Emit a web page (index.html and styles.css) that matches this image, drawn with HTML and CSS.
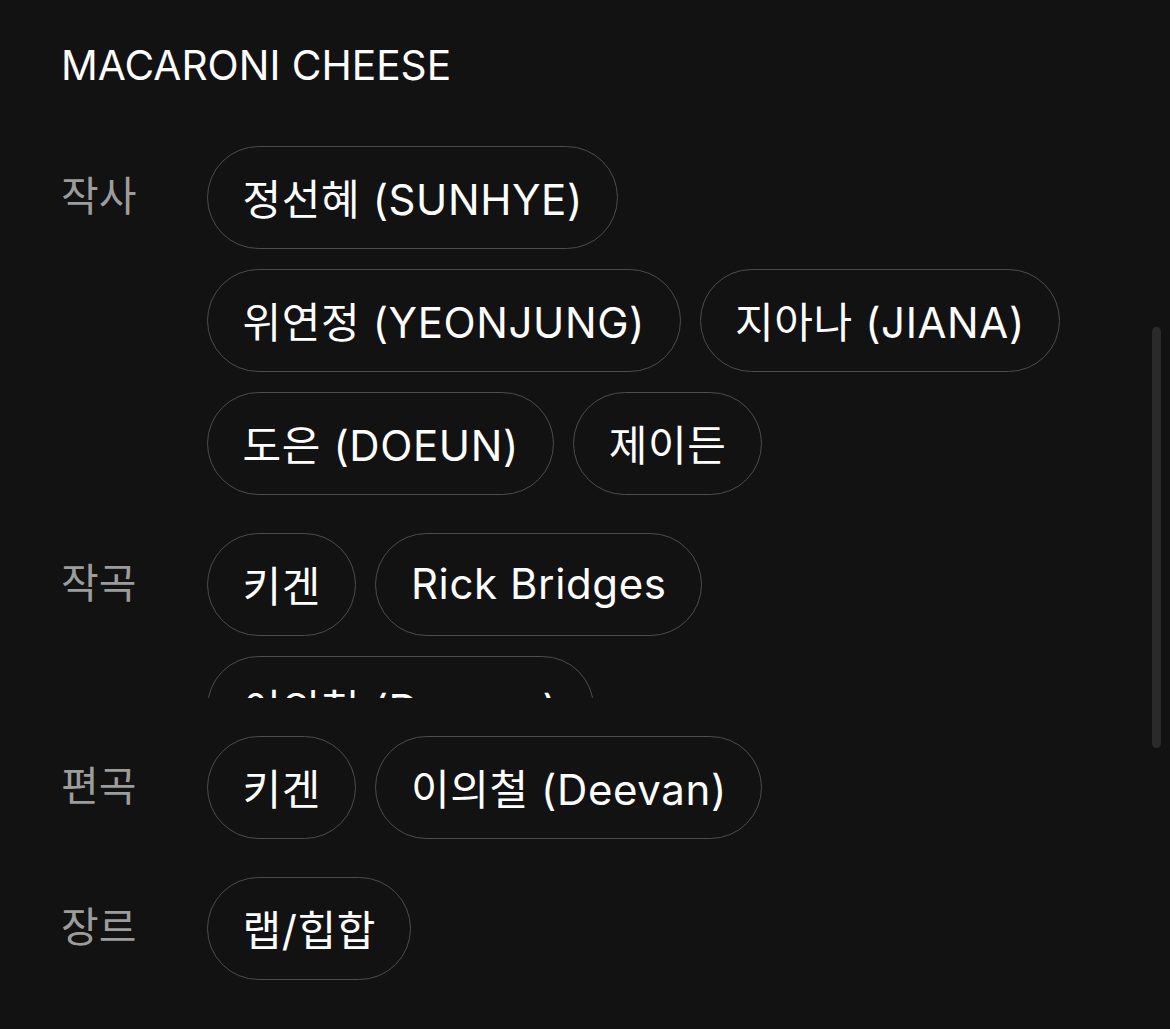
FILE: index.html
```html
<!DOCTYPE html>
<html lang="ko">
<head>
<meta charset="utf-8">
<link rel="stylesheet" href="styles.css">
</head>
<body>
<main class="page">
  <h1 class="title">MACARONI CHEESE</h1>
  <section class="credit">
    <div class="label">작사</div>
    <div class="chips">
      <span class="chip">정선혜 (SUNHYE)</span>
      <span class="chip">위연정 (YEONJUNG)</span>
      <span class="chip">지아나 (JIANA)</span>
      <span class="chip">도은 (DOEUN)</span>
      <span class="chip">제이든</span>
    </div>
  </section>
  <section class="credit">
    <div class="label">작곡</div>
    <div class="chips clipped">
      <span class="chip">키겐</span>
      <span class="chip">Rick Bridges</span>
      <span class="chip">이의철 (Deevan)</span>
    </div>
  </section>
  <section class="credit">
    <div class="label">편곡</div>
    <div class="chips">
      <span class="chip">키겐</span>
      <span class="chip">이의철 (Deevan)</span>
    </div>
  </section>
  <section class="credit">
    <div class="label">장르</div>
    <div class="chips">
      <span class="chip">랩/힙합</span>
    </div>
  </section>
</main>
<div class="scrollbar"></div>
</body>
</html>
```
FILE: styles.css
```css
html, body {
  margin: 0;
  padding: 0;
  background: #121212;
}
body {
  font-family: "Inter", "Noto Sans CJK KR", sans-serif;
  color: #ffffff;
  height: 1029px;
  overflow: hidden;
}
.page {
  padding: 40px 0 0 61px;
  display: flex;
  flex-direction: column;
  gap: 38px;
}
.title {
  margin: 0 0 16px 0;
  font-size: 40.7px;
  font-weight: 400;
  line-height: 52px;
  letter-spacing: 0;
}
.credit {
  display: flex;
  align-items: flex-start;
}
.label {
  width: 146px;
  flex: none;
  height: 103px;
  line-height: 100px;
  font-size: 41px;
  color: #9c9c9c;
}
.chips {
  width: 880px;
  display: flex;
  flex-wrap: wrap;
  gap: 20px 19px;
}
.clipped {
  max-height: 165px;
  overflow: hidden;
}
.chip {
  box-sizing: border-box;
  height: 103px;
  padding: 0 34.5px 3px;
  border: 1.5px solid #4c4c4c;
  border-radius: 52px;
  display: inline-flex;
  align-items: center;
  font-size: 42px;
  letter-spacing: 0.6px;
  white-space: nowrap;
}
.scrollbar {
  position: fixed;
  left: 1152px;
  top: 327px;
  width: 9px;
  height: 421px;
  border-radius: 5px;
  background: #2a2a2a;
}
```
